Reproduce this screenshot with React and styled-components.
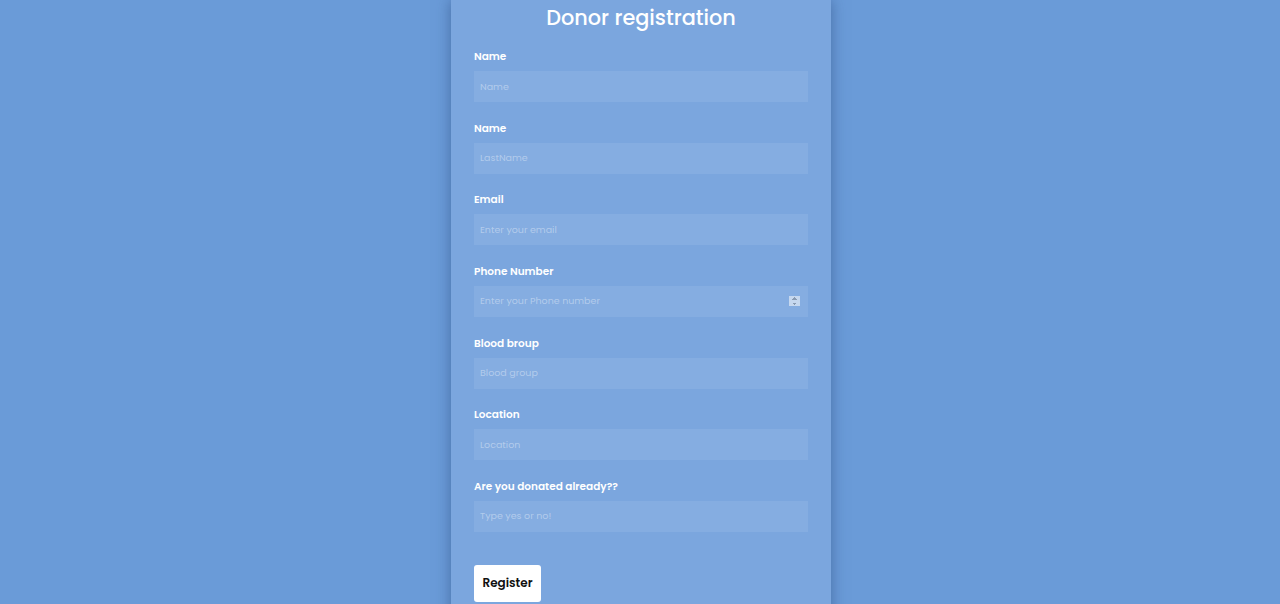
import React from "react";
import styled, { createGlobalStyle } from "styled-components";

const GlobalStyle = createGlobalStyle`
  html, body {
    margin: 0;
    padding: 0;
    height: 100%;
    overflow: hidden;
  }
  body {
    background: #6a9bd8;
    font-family: "Poppins", "Open Sans", "Liberation Sans", sans-serif;
  }
`;

const fields = [
  { label: "Name", placeholder: "Name", type: "text" },
  { label: "Name", placeholder: "LastName", type: "text" },
  { label: "Email", placeholder: "Enter your email", type: "email" },
  { label: "Phone Number", placeholder: "Enter your Phone number", type: "number" },
  { label: "Blood broup", placeholder: "Blood group", type: "text" },
  { label: "Location", placeholder: "Location", type: "text" },
  { label: "Are you donated already??", placeholder: "Type yes or no!", type: "text" },
];

const App = () => {
  return (
    <>
      <GlobalStyle />
      <Page>
        <Card>
          <Title>Donor registration</Title>
          <Form onSubmit={(e) => e.preventDefault()}>
            {fields.map((f, i) => (
              <Field key={i}>
                <Label>{f.label}</Label>
                <Input type={f.type} placeholder={f.placeholder} />
              </Field>
            ))}
            <Button type="submit">Register</Button>
          </Form>
        </Card>
      </Page>
    </>
  );
};

export default App;

const Page = styled.div`
  display: flex;
  justify-content: center;
  height: 604px;
  padding-left: 2px;
`;

const Card = styled.div`
  width: 380px;
  box-sizing: border-box;
  padding: 0 23px 40px;
  background: #7ba6de;
  box-shadow: 0 0 14px rgba(40, 70, 120, 0.55);
  height: 660px;
`;

const Title = styled.h2`
  margin: 0;
  font-size: 20.8px;
  line-height: 35px;
  font-weight: 500;
  color: #ffffff;
  text-align: center;
`;

const Form = styled.form`
  display: flex;
  flex-direction: column;
  padding-top: 15px;
`;

const Field = styled.div`
  display: flex;
  flex-direction: column;
  margin-bottom: 19.67px;
`;

const Label = styled.label`
  font-size: 10.5px;
  line-height: 14px;
  font-weight: 600;
  color: #ffffff;
  margin-bottom: 7px;
`;

const Input = styled.input`
  height: 31px;
  box-sizing: border-box;
  border: none;
  outline: none;
  background: #85ade1;
  padding: 0 6px;
  font-family: inherit;
  font-size: 9.5px;
  color: #ffffff;

  &::placeholder {
    color: rgba(255, 255, 255, 0.38);
  }
  &::-webkit-inner-spin-button {
    opacity: 0.55;
    transform: scale(0.75);
  }
`;

const Button = styled.button`
  align-self: flex-start;
  margin-top: 13px;
  width: 67px;
  height: 37px;
  border: none;
  border-radius: 3px;
  background: #ffffff;
  color: #111111;
  font-family: inherit;
  font-size: 12px;
  font-weight: 600;
  cursor: pointer;
`;
